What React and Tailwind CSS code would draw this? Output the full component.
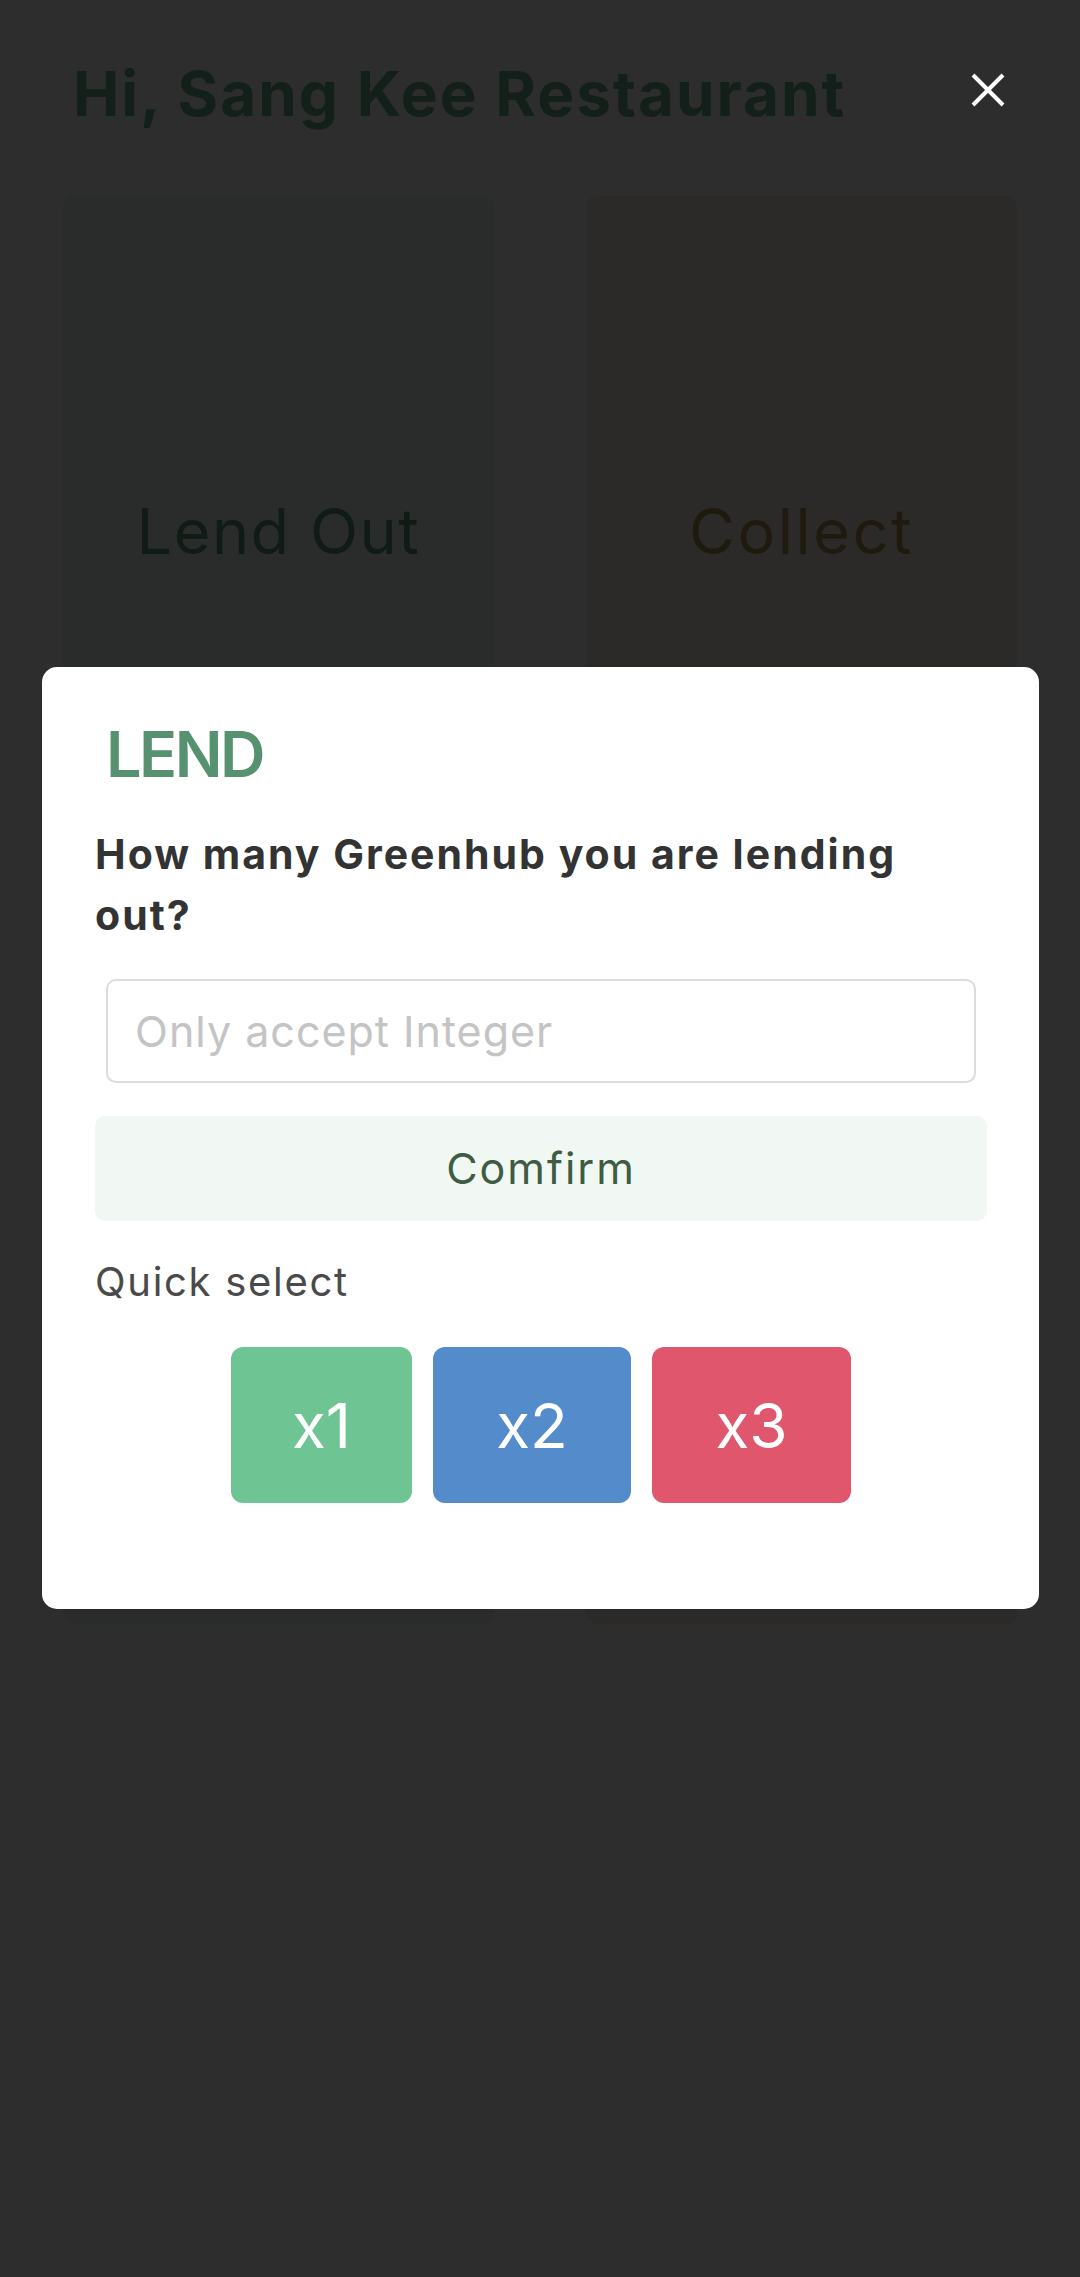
import { useState } from "react";

const QUICK = [
  { label: "x1", value: 1, cls: "w-[181px] bg-[#6fc493]" },
  { label: "x2", value: 2, cls: "w-[198px] bg-[#548bca]" },
  { label: "x3", value: 3, cls: "w-[199px] bg-[#df566d]" },
];

function CloseIcon() {
  return (
    <svg width="34" height="34" viewBox="0 0 34 34" fill="none">
      <path d="M2 2L32 32M32 2L2 32" stroke="#ffffff" strokeWidth="4" />
    </svg>
  );
}

export default function App() {
  const [amount, setAmount] = useState("");

  return (
    <div className="relative w-[1080px] min-h-[2277px] bg-[#2d2d2d] font-['Inter',sans-serif]">
      {/* Header */}
      <div className="flex items-start justify-between pl-[73px] pr-[75px] pt-[54px]">
        <h1 className="text-[62px] leading-[80px] font-bold tracking-[2px] text-[#131f19]">
          Hi, Sang Kee Restaurant
        </h1>
        <button className="mt-[19px]">
          <CloseIcon />
        </button>
      </div>

      {/* Dimmed action cards */}
      <div className="mt-[62px] flex gap-[92px] pl-[63px]">
        <div className="w-[431px] h-[1428px] rounded-[12px] bg-[#2a2c2b] pt-[295px] text-center">
          <span className="text-[63px] leading-[80px] tracking-[1.5px] text-[#111b15]">Lend Out</span>
        </div>
        <div className="w-[431px] h-[1428px] rounded-[12px] bg-[#2c2a28] pt-[295px] text-center">
          <span className="text-[63px] leading-[80px] tracking-[2.5px] text-[#1f1a10]">Collect</span>
        </div>
      </div>

      {/* Lend modal */}
      <div className="absolute left-[42px] top-[667px] w-[997px] rounded-[15px] bg-white pl-[53px] pr-[52px] pt-[47px] pb-[106px]">
        <h2 className="ml-[11px] text-[63px] leading-[80px] font-semibold tracking-[-2.5px] text-[#579270]">LEND</h2>
        <p className="mt-[30px] text-[41px] leading-[61px] font-bold tracking-[2px] text-[#333333]">
          How many Greenhub you are lending out?
        </p>
        <input
          value={amount}
          onChange={(e) => setAmount(e.target.value)}
          placeholder="Only accept Integer"
          className="mt-[33px] mx-[11px] block w-[870px] h-[104px] rounded-[10px] border-2 border-[#dcdcdc] px-[27px] text-[43px] tracking-[1px] text-[#333333] outline-none placeholder:text-[#c4c4c4]"
        />
        <button className="mt-[33px] block w-full h-[105px] rounded-[10px] bg-[#f1f7f3] text-[43px] tracking-[2px] text-[#3e5c44]">
          Comfirm
        </button>
        <p className="mt-[31px] text-[40px] leading-[60px] tracking-[1.7px] text-[#4a4a4a]">Quick select</p>
        <div className="mt-[35px] flex justify-center gap-[21px]">
          {QUICK.map((q) => (
            <button
              key={q.label}
              onClick={() => setAmount(String(q.value))}
              className={`${q.cls} h-[156px] rounded-[12px] text-[62px] text-white`}
            >
              {q.label}
            </button>
          ))}
        </div>
      </div>
    </div>
  );
}
